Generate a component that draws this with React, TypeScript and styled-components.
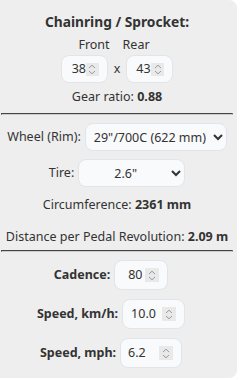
import styled, { createGlobalStyle } from 'styled-components';

const GlobalStyle = createGlobalStyle`
  body {
    margin: 0;
    background: #fff;
    font-family: "Noto Sans", "Open Sans", sans-serif;
    color: #333;
  }
`;

const Panel = styled.div`
  box-sizing: border-box;
  width: 237px;
  height: 378px;
  padding: 12px 4px 0 1px;
  background: #eeeeee;
  border-radius: 0 8px 8px 0;
  font-size: 12.5px;
  line-height: 20px;
`;

const Title = styled.div`
  text-align: center;
  font-weight: 700;
  font-size: 13.75px;
`;

const ColumnLabels = styled.div`
  display: flex;
  justify-content: center;
  gap: 13px;
  margin-top: 3px;
  padding-right: 6px;
`;

const Row = styled.div<{ $top?: number }>`
  display: flex;
  justify-content: center;
  align-items: center;
  gap: 4px;
  margin-top: ${(p) => p.$top ?? 0}px;
`;

const Times = styled.span`
  margin: 0 2px;
`;

const Line = styled.div<{ $top?: number }>`
  text-align: center;
  margin-top: ${(p) => p.$top ?? 0}px;
  b {
    font-weight: 700;
  }
`;

const Divider = styled.hr<{ $top: number }>`
  margin: ${(p) => p.$top}px 0 0;
  border: 1px inset #999;
  border-bottom-color: #ccc;
`;

const Label = styled.label<{ $bold?: boolean }>`
  font-weight: ${(p) => (p.$bold ? 700 : 400)};
`;

const NumberBox = styled.div<{ $w: number; $h?: number; $pl: number }>`
  box-sizing: border-box;
  display: flex;
  align-items: center;
  width: ${(p) => p.$w}px;
  height: ${(p) => p.$h ?? 28}px;
  padding: 0 8px 0 ${(p) => p.$pl}px;
  background: #f8fafc;
  border: 1px solid #e1e5ea;
  border-radius: 8px;
`;

const NumberField = styled.input`
  flex: 1;
  min-width: 0;
  padding: 0;
  border: none;
  background: transparent;
  font: inherit;
  color: #333;
  outline: none;
`;

const Spinner = styled.span<{ $size: number }>`
  flex: none;
  display: flex;
  align-items: center;
  justify-content: center;
  width: ${(p) => p.$size}px;
  height: ${(p) => p.$size}px;
  background: #e9e9ea;
  svg {
    display: block;
  }
`;

const Select = styled.select<{ $w: number }>`
  box-sizing: border-box;
  width: ${(p) => p.$w}px;
  height: 28px;
  padding: 0 4px;
  font: inherit;
  color: #333;
  text-align: center;
  text-align-last: center;
  background: #f8fafc;
  border: 1px solid #e1e5ea;
  border-radius: 8px;
  outline: none;
`;

const Push = styled.span`
  width: 8px;
`;

function NumberInput(props: { value: string; w: number; h?: number; pl: number }) {
  const size = props.h === 30 ? 14 : 13;
  return (
    <NumberBox $w={props.w} $h={props.h} $pl={props.pl}>
      <NumberField type="text" inputMode="decimal" defaultValue={props.value} />
      <Spinner $size={size}>
        <svg width="8" height="11" viewBox="0 0 8 11" fill="none" stroke="#9a9a9a" strokeWidth="1">
          <path d="M1 4 L4 1.2 L7 4" />
          <path d="M1 7 L4 9.8 L7 7" />
        </svg>
      </Spinner>
    </NumberBox>
  );
}

export default function App() {
  return (
    <>
      <GlobalStyle />
      <Panel>
        <Title>Chainring / Sprocket:</Title>
        <ColumnLabels>
          <span>Front</span>
          <span>Rear</span>
        </ColumnLabels>
        <Row>
          <NumberInput value="38" w={47} pl={10} />
          <Times>x</Times>
          <NumberInput value="43" w={47} pl={9} />
        </Row>
        <Line $top={4}>
          Gear ratio: <b>0.88</b>
        </Line>
        <Divider $top={6} />
        <Row $top={8}>
          <Label>Wheel (Rim):</Label>
          <Select $w={142} defaultValue="622">
            <option value="622">29"/700C (622 mm)</option>
          </Select>
        </Row>
        <Row $top={8}>
          <Label>Tire:</Label>
          <Select $w={107} defaultValue="2.6">
            <option value="2.6">2.6"</option>
          </Select>
        </Row>
        <Line $top={8}>
          Circumference: <b>2361 mm</b>
        </Line>
        <Line $top={12}>
          Distance per Pedal Revolution: <b>2.09 m</b>
        </Line>
        <Divider $top={3} />
        <Row $top={8}>
          <Label $bold>Cadence:</Label>
          <NumberInput value="80" w={54} h={30} pl={13} />
          <Push />
        </Row>
        <Row $top={9}>
          <Label $bold>Speed, km/h:</Label>
          <NumberInput value="10.0" w={63} h={30} pl={8} />
          <Push />
        </Row>
        <Row $top={9}>
          <Label $bold>Speed, mph:</Label>
          <NumberInput value="6.2" w={62} h={30} pl={7} />
          <Push />
        </Row>
      </Panel>
    </>
  );
}
